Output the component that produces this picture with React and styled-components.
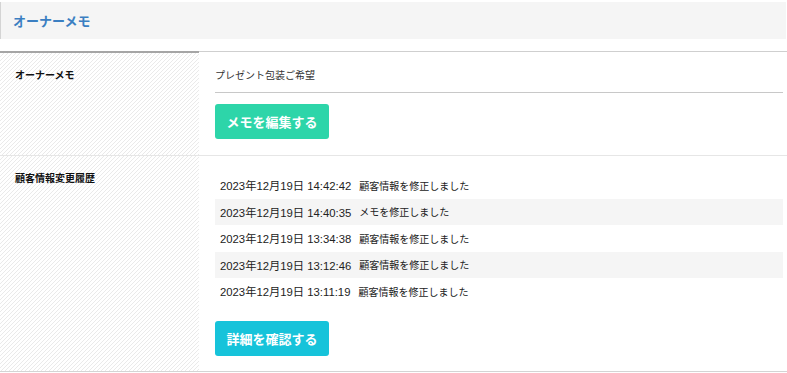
import React from "react";
import styled, { createGlobalStyle } from "styled-components";

const GlobalStyle = createGlobalStyle`
  html, body {
    margin: 0;
    padding: 0;
    background: #fff;
  }
  body {
    font-family: "Liberation Sans", "Noto Sans CJK JP", sans-serif;
    color: #222;
  }
`;

const history = [
  { at: "2023年12月19日 14:42:42", text: "顧客情報を修正しました" },
  { at: "2023年12月19日 14:40:35", text: "メモを修正しました" },
  { at: "2023年12月19日 13:34:38", text: "顧客情報を修正しました" },
  { at: "2023年12月19日 13:12:46", text: "顧客情報を修正しました" },
  { at: "2023年12月19日 13:11:19", text: "顧客情報を修正しました" },
];

export default function App() {
  return (
    <>
      <GlobalStyle />
      <Page>
        <Heading>オーナーメモ</Heading>
        <Table>
          <Row>
            <Label>オーナーメモ</Label>
            <Cell $top={17}>
              <MemoText>プレゼント包装ご希望</MemoText>
              <Button $color="#2dd5a9">メモを編集する</Button>
            </Cell>
          </Row>
          <Row>
            <Label>顧客情報変更履歴</Label>
            <Cell $top={16} $bottom={15}>
              <HistoryList>
                {history.map((h, i) => (
                  <HistoryItem key={i} $shaded={i % 2 === 1}>
                    <Stamp>{h.at}</Stamp>
                    <span>{h.text}</span>
                  </HistoryItem>
                ))}
              </HistoryList>
              <Button $color="#16c3da">詳細を確認する</Button>
            </Cell>
          </Row>
        </Table>
      </Page>
    </>
  );
}

const Page = styled.main`
  padding-top: 2px;
  width: 787px;
`;

const Heading = styled.h2`
  margin: 0 1px 12px 0;
  height: 37px;
  display: flex;
  align-items: center;
  padding-left: 12px;
  background: #f5f5f5;
  border-left: 1px solid #d4d4d4;
  color: #3b7fc2;
  font-size: 13px;
  font-weight: bold;
`;

const Table = styled.section`
  display: flex;
  flex-direction: column;
  border-top: 1px solid #cfcfcf;
  border-bottom: 1px solid #d4d4d4;
`;

const Row = styled.div`
  display: grid;
  grid-template-columns: 199px 1fr;
  & + & {
    border-top: 1px solid #e6e6e6;
  }
  &:first-child > :first-child {
    border-top: 2px solid #a5a5a5;
    margin-top: -1px;
  }
`;

const Label = styled.div`
  padding: 16px 15px;
  font-size: 10px;
  line-height: 14px;
  font-weight: bold;
  color: #111;
  background-color: #fff;
  background-image: linear-gradient(
    -45deg,
    #eaeaea 12.5%,
    transparent 12.5%,
    transparent 50%,
    #eaeaea 50%,
    #eaeaea 62.5%,
    transparent 62.5%
  );
  background-size: 4px 4px;
`;

const Cell = styled.div`
  padding: ${(p) => p.$top ?? 16}px 4px ${(p) => p.$bottom ?? 16}px 16px;
  display: flex;
  flex-direction: column;
  align-items: flex-start;
`;

const MemoText = styled.p`
  margin: 0 0 11px;
  align-self: stretch;
  padding-bottom: 9px;
  border-bottom: 1px solid #c8c8c8;
  font-size: 10px;
  line-height: 14px;
  color: #333;
`;

const Button = styled.button`
  width: 114px;
  height: 35px;
  border: none;
  border-radius: 3px;
  background: ${(p) => p.$color};
  color: #fff;
  font-family: inherit;
  font-size: 13px;
  font-weight: bold;
  cursor: pointer;
`;

const HistoryList = styled.ul`
  list-style: none;
  margin: 0 0 16px;
  padding: 0;
  align-self: stretch;
`;

const HistoryItem = styled.li`
  height: 26.5px;
  display: flex;
  align-items: center;
  gap: 8px;
  padding-left: 5px;
  font-size: 10px;
  color: #222;
  background: ${(p) => (p.$shaded ? "#f5f5f5" : "transparent")};
`;

const Stamp = styled.span`
  font-size: 11.3px;
`;
